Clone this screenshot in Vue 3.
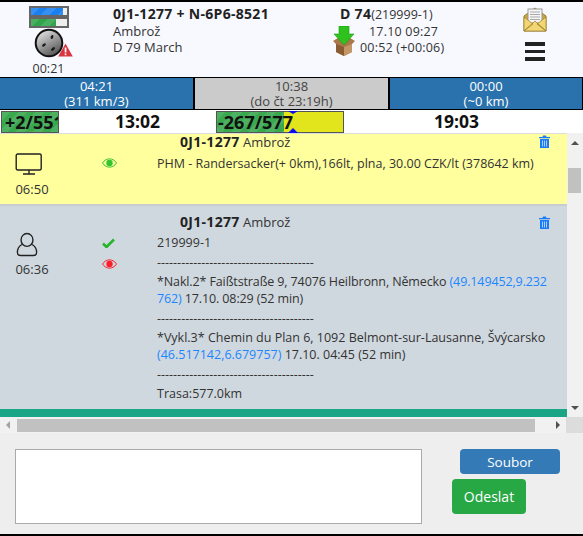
<template>
  <div class="page">
    <header class="top">
      <div class="status">
        <div class="bar blue"><span></span></div>
        <div class="bar green"><span></span></div>
        <div class="gauge">
          <svg width="30" height="30" viewBox="0 0 30 30">
            <defs>
              <linearGradient id="plug" x1="0.2" y1="0" x2="0.8" y2="1">
                <stop offset="0" stop-color="#e6e6e6" />
                <stop offset="1" stop-color="#4a4a4a" />
              </linearGradient>
            </defs>
            <circle cx="15" cy="15" r="13.3" fill="url(#plug)" stroke="#111" stroke-width="2" />
            <ellipse cx="18" cy="9" rx="1.3" ry="2" transform="rotate(20 18 9)" fill="#1c1c1c" />
            <ellipse cx="10" cy="17" rx="1.3" ry="2.2" transform="rotate(50 10 17)" fill="#1c1c1c" />
            <ellipse cx="19" cy="21" rx="1.3" ry="2.4" transform="rotate(50 19 21)" fill="#1c1c1c" />
          </svg>
          <svg class="warn" width="15" height="14" viewBox="0 0 15 14">
            <path d="M7.5 .5 14.8 13.5H.2Z" fill="#d9343f" />
            <rect x="6.7" y="4.5" width="1.7" height="5" fill="#fff" />
            <rect x="6.7" y="10.5" width="1.7" height="1.7" fill="#fff" />
          </svg>
        </div>
        <div class="status-time">00:21</div>
      </div>
      <div class="driver">
        <div class="strong">0J1-1277 + N-6P6-8521</div>
        <div>Ambrož</div>
        <div>D 79 March</div>
      </div>
      <div class="trip">
        <div class="trip-title"><b>D 74</b>(219999-1)</div>
        <div class="trip-row">
          <svg width="22" height="30" viewBox="0 0 22 30">
            <path d="M0 15 5 12H17L22 15 19 18V26L11 30 3 26V18Z" fill="#a9784a" />
            <path d="M3 18 11 21V30L3 26Z" fill="#8a5c33" />
            <path d="M11 21 19 18V26L11 30Z" fill="#c49566" />
            <path d="M6 0H16V8H21L11 19 1 8H6Z" fill="#2fc21f" stroke="#1d9a12" stroke-width=".6" />
          </svg>
          <div class="trip-times">
            <div class="indent">17.10 09:27</div>
            <div>00:52 (+00:06)</div>
          </div>
        </div>
      </div>
      <div class="actions">
        <svg width="24" height="26" viewBox="0 0 24 26">
          <path d="M1 10 12 2 23 10V25H1Z" fill="#c9a63f" stroke="#9a7b2c" />
          <rect x="5" y="3" width="14" height="14" fill="#f6f6f6" stroke="#999" />
          <path d="M7 6H17M7 8.5H17M7 11H17M7 13.5H17" stroke="#aaa" />
          <path d="M1 25 12 15 23 25ZM1 11 10 18 1 25ZM23 11 14 18 23 25Z" fill="#f2d673" stroke="#9a7b2c" stroke-width=".7" />
        </svg>
        <div class="burger"><i></i><i></i><i></i></div>
      </div>
    </header>

    <div class="tabs">
      <div class="tab">04:21<br />(311 km/3)</div>
      <div class="tab grey">10:38<br />(do čt 23:19h)</div>
      <div class="tab">00:00<br />(~0 km)</div>
    </div>

    <div class="progress">
      <div class="meter small"><div class="fill" style="width: 100%"></div><span>+2/551</span></div>
      <strong class="t1">13:02</strong>
      <div class="meter large">
        <div class="fill" style="width: 53%"></div>
        <span>-267/577</span>
        <i class="tick up"></i><i class="tick down"></i>
      </div>
      <strong class="t2">19:03</strong>
    </div>

    <div class="list-wrap">
      <div class="list">
        <div class="msg yellow">
          <div class="who">
            <svg width="28" height="23" viewBox="0 0 28 23" fill="none" stroke="#222" stroke-width="1.4">
              <rect x="1.2" y="1" width="25" height="16" rx="1.5" />
              <path d="M14 17V20.5M8 21H20" />
            </svg>
            <span>06:50</span>
          </div>
          <div class="marks">
            <svg width="15" height="10" viewBox="0 0 15 10"><path d="M.5 5C4 -.5 11 -.5 14.5 5 11 10.5 4 10.5 .5 5Z" fill="none" stroke="#33c52e" /><circle cx="7.5" cy="5" r="3.2" fill="#33c52e" /></svg>
          </div>
          <div class="body">
            <div class="head"><b>0J1-1277</b> Ambrož</div>
            <div class="line">PHM - Randersacker(+ 0km),166lt, plna, 30.00 CZK/lt (378642 km)</div>
          </div>
          <svg class="trash" width="11" height="13" viewBox="0 0 11 13"><path d="M0 2H3.5L4 .5H7L7.5 2H11V3.2H0ZM1 4H10V13H1Z" fill="#1a7cf7" /><path d="M3.5 5.5V11.5M5.5 5.5V11.5M7.5 5.5V11.5" stroke="#d0e4ff" stroke-width=".8" /></svg>
        </div>
        <div class="msg slate">
          <div class="who person">
            <svg width="22" height="25" viewBox="0 0 24 26" fill="none" stroke="#222" stroke-width="1.5">
              <ellipse cx="12" cy="8" rx="6.5" ry="7" />
              <path d="M6.5 13C3 15 1.5 18 1.5 21.5 1.5 24 3 25 5 25H19C21 25 22.5 24 22.5 21.5 22.5 18 21 15 17.5 13" />
            </svg>
            <span>06:36</span>
          </div>
          <div class="marks stack">
            <svg width="13" height="10" viewBox="0 0 13 10"><path d="M1 5.5 4.5 9 12 1.5" fill="none" stroke="#24b52a" stroke-width="2.6" /></svg>
            <svg width="15" height="10" viewBox="0 0 15 10"><path d="M.5 5C4 -.5 11 -.5 14.5 5 11 10.5 4 10.5 .5 5Z" fill="none" stroke="#fb1f2a" /><circle cx="7.5" cy="5" r="3.2" fill="#fb1f2a" /></svg>
          </div>
          <div class="body">
            <div class="head second"><b>0J1-1277</b> Ambrož</div>
            <div class="line">219999-1</div>
            <div class="line">---------------------------------------</div>
            <div class="line tight">*Nakl.2* Faißtstraße 9, 74076 Heilbronn, Německo <a>(49.149452,9.232762)</a> 17.10. 08:29 (52 min)</div>
            <div class="line">---------------------------------------</div>
            <div class="line">*Vykl.3* Chemin du Plan 6, 1092 Belmont-sur-Lausanne, Švýcarsko <a>(46.517142,6.679757)</a> 17.10. 04:45 (52 min)</div>
            <div class="line">---------------------------------------</div>
            <div class="line">Trasa:577.0km</div>
          </div>
          <svg class="trash low" width="11" height="13" viewBox="0 0 11 13"><path d="M0 2H3.5L4 .5H7L7.5 2H11V3.2H0ZM1 4H10V13H1Z" fill="#1a7cf7" /><path d="M3.5 5.5V11.5M5.5 5.5V11.5M7.5 5.5V11.5" stroke="#d0e4ff" stroke-width=".8" /></svg>
        </div>
        <div class="teal"></div>
      </div>
      <div class="vscroll">
        <i class="arrow-up"></i>
        <div class="vthumb"></div>
        <i class="arrow-down"></i>
      </div>
    </div>

    <div class="hscroll">
      <i class="arrow-left"></i>
      <div class="hthumb"></div>
      <i class="arrow-right"></i>
      <div class="corner"></div>
    </div>

    <div class="composer">
      <textarea class="input"></textarea>
      <div class="buttons">
        <button class="btn file">Soubor</button>
        <button class="btn send">Odeslat</button>
      </div>
    </div>
  </div>
</template>

<script setup>
</script>

<style>
html, body {
  margin: 0;
  background: #000;
}
</style>

<style scoped>
.page {
  width: 583px;
  height: 536px;
  box-sizing: border-box;
  padding: 2px 0;
  background: #000;
  display: flex;
  flex-direction: column;
  font-family: "Open Sans", "Liberation Sans", sans-serif;
  font-size: 12.5px;
  color: #333;
  overflow: hidden;
}

.top {
  height: 75px;
  background: #f8f9ff;
  display: flex;
  flex: none;
}

.status {
  width: 97px;
  display: flex;
  flex-direction: column;
  align-items: center;
  padding-top: 4px;
  box-sizing: border-box;
}

.bar {
  width: 36px;
  height: 7px;
  border: 2px solid #666;
  background: #eee;
  display: flex;
}

.bar span {
  display: block;
  height: 100%;
  background-image: repeating-linear-gradient(135deg, rgba(255, 255, 255, .12) 0 6px, transparent 6px 12px);
}

.blue span {
  width: 89%;
  background-color: #1a80f0;
}

.green span {
  width: 72%;
  background-color: #30a54c;
}

.gauge {
  position: relative;
  height: 30px;
  width: 30px;
}

.gauge svg {
  display: block;
}

.warn {
  position: absolute;
  left: 24px;
  top: 15px;
}

.status-time {
  margin-top: 3px;
  line-height: 16px;
  text-align: center;
}

.driver {
  width: 212px;
  padding: 4px 0 0 16px;
  box-sizing: border-box;
  line-height: 16px;
  font-size: 13px;
}

.strong,
.head b,
.trip-title b {
  font-weight: 700;
  font-size: 14px;
  letter-spacing: .3px;
  color: #222;
}

.strong {
  margin-bottom: 1px;
}

.trip {
  width: 170px;
  padding: 4px 0 0 31px;
  box-sizing: border-box;
  line-height: 16px;
}

.trip-row {
  display: flex;
  gap: 5px;
  margin-left: -7px;
  margin-top: 3px;
}

.trip-times {
  line-height: 16px;
  margin-top: -2px;
  white-space: nowrap;
  letter-spacing: .2px;
}

.indent {
  padding-left: 9px;
}

.actions {
  flex: 1;
  display: flex;
  flex-direction: column;
  align-items: center;
  padding: 4px 0 0 8px;
  box-sizing: border-box;
  gap: 10px;
}

.burger {
  width: 20px;
  display: flex;
  flex-direction: column;
  gap: 4px;
}

.burger i {
  height: 3.5px;
  background: #222;
}

.tabs {
  height: 33px;
  display: grid;
  grid-template-columns: 193px 193px 1fr;
  gap: 2px;
  box-sizing: border-box;
  border: solid #000;
  border-width: 1px 1px 1px 0;
  flex: none;
}

.tab {
  background: #2a72ad;
  color: #fff;
  font-size: 13px;
  text-align: center;
  line-height: 15px;
  padding-top: 1px;
  box-sizing: border-box;
}

.tab.grey {
  background: #cbcbcb;
  color: #444;
}

.progress {
  height: 23px;
  background: #fff;
  display: flex;
  align-items: flex-end;
  flex: none;
}

.progress strong {
  font-size: 17.5px;
  line-height: 23px;
  color: #111;
}

.t1 {
  margin-left: 56px;
}

.t2 {
  margin-left: 90px;
}

.meter {
  position: relative;
  height: 22px;
  box-sizing: border-box;
  border: 1px solid #555;
  background: #e2e41c;
  font-weight: 700;
  font-size: 18px;
  color: #111;
  line-height: 20px;
  overflow: hidden;
  flex: none;
}

.meter span {
  position: relative;
  white-space: nowrap;
  padding-left: 1px;
}

.fill {
  position: absolute;
  left: 0;
  top: 0;
  bottom: 0;
  background-color: #3aa84f;
  background-image: repeating-linear-gradient(135deg, rgba(255, 255, 255, .1) 0 6px, transparent 6px 12px);
}

.small {
  width: 58px;
  margin-left: 1px;
}

.small span {
  padding-left: 3px;
}

.large {
  width: 128px;
  margin-left: 56px;
  overflow: visible;
}

.tick {
  position: absolute;
  left: 71px;
  width: 0;
  height: 0;
  border: 5px solid transparent;
}

.up {
  top: -1px;
  border-top: 3px solid #0b0bf0;
  border-bottom: 0;
}

.down {
  bottom: -1px;
  border-bottom: 5px solid #0b0bf0;
  border-top: 0;
}

.list-wrap {
  height: 284px;
  display: flex;
  flex: none;
  overflow: hidden;
  background: #f1f1f1;
}

.list {
  width: 567px;
  flex: none;
  overflow: hidden;
  border-top: 1px solid #dcdcdc;
  box-sizing: border-box;
}

.msg {
  display: flex;
  position: relative;
  box-sizing: border-box;
}

.yellow {
  height: 72px;
  background: #ffff9e;
  border-bottom: 2px solid #c8ccd0;
}

.slate {
  height: 203px;
  background: #d0d8df;
}

.who {
  width: 64px;
  display: flex;
  flex-direction: column;
  align-items: center;
  padding-top: 19px;
  box-sizing: border-box;
  font-size: 13px;
}

.who svg {
  display: block;
  margin-left: -6px;
}

.who span {
  line-height: 16px;
  margin-top: 5px;
}

.person {
  padding-top: 26px;
}

.person svg {
  margin-left: -10px;
}

.person span {
  margin-top: 4px;
}

.marks {
  width: 93px;
  padding: 24px 0 0 38px;
  box-sizing: border-box;
  display: flex;
  flex-direction: column;
}

.stack {
  padding-top: 32px;
  gap: 11px;
}

.marks svg {
  display: block;
}

.body {
  width: 392px;
}

.head {
  padding-left: 23px;
  font-size: 13px;
  line-height: 16px;
}

.head.second {
  padding-top: 8px;
  margin-bottom: 4px;
}

.yellow .line {
  margin-top: 5px;
}

.line a {
  color: #1a86ff;
}

.line {
  line-height: 17px;
  margin-bottom: 2.5px;
  word-break: break-all;
}

.tight {
  letter-spacing: -.12px;
}

.trash {
  position: absolute;
  left: 539px;
  top: 1px;
}

.trash.low {
  top: 10px;
}

.teal {
  height: 8px;
  background: #1aa587;
}

.vscroll {
  flex: 1;
  position: relative;
  background: #f1f1f1;
}

.vthumb {
  position: absolute;
  top: 35px;
  left: 1px;
  right: 2px;
  height: 25px;
  background: #c1c1c1;
}

.arrow-up {
  position: absolute;
  top: 8px;
  left: 4px;
  border: 4px solid transparent;
  border-top: 0;
  border-bottom: 4px solid #505050;
}

.arrow-down {
  position: absolute;
  bottom: 7px;
  left: 4px;
  border: 4px solid transparent;
  border-bottom: 0;
  border-top: 4px solid #505050;
}

.hscroll {
  height: 16px;
  background: #f1f1f1;
  position: relative;
  flex: none;
}

.hthumb {
  position: absolute;
  left: 17px;
  top: 2px;
  width: 518px;
  height: 13px;
  background: #c1c1c1;
}

.arrow-left {
  position: absolute;
  left: 6px;
  top: 4px;
  border: 4px solid transparent;
  border-left: 0;
  border-right: 4px solid #a3a3a3;
}

.arrow-right {
  position: absolute;
  left: 556px;
  top: 4px;
  border: 4px solid transparent;
  border-right: 0;
  border-left: 4px solid #505050;
}

.corner {
  position: absolute;
  left: 566px;
  top: 0;
  right: 0;
  height: 16px;
  background: #dcdcdc;
}

.composer {
  flex: 1;
  background: #eee;
  display: flex;
  padding: 16px 0 0 15px;
  box-sizing: border-box;
}

.input {
  width: 407px;
  height: 75px;
  box-sizing: border-box;
  border: 1px solid #aaa;
  background: #fff;
  padding: 0;
  margin: 0;
  resize: none;
  outline: none;
}

.buttons {
  display: flex;
  flex-direction: column;
  align-items: flex-start;
  margin-left: 30px;
}

.btn {
  font: inherit;
  color: #fff;
  border: 0;
  border-radius: 4px;
  padding: 0;
}

.file {
  width: 100px;
  height: 25px;
  margin-left: 8px;
  font-size: 13.5px;
  background: #337ab7;
}

.send {
  width: 74px;
  height: 35px;
  margin-top: 5px;
  font-size: 14px;
  background: #28a745;
}
</style>
